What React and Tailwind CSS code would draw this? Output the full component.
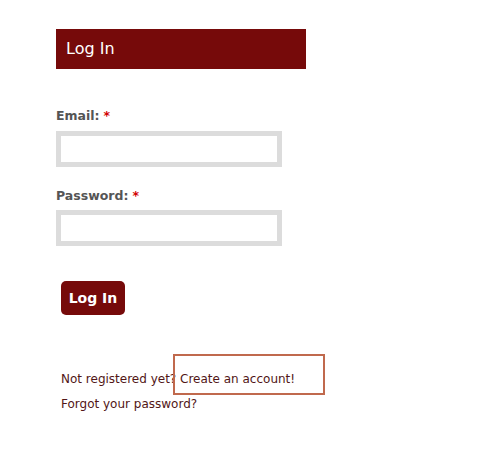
export default function App() {
  const font = { fontFamily: '"DejaVu Sans", Verdana, sans-serif' };
  return (
    <div className="w-[496px] h-[458px] bg-white relative" style={font}>
      <div className="pt-[29px] pl-[56px]">
        <div className="w-[250px] h-[40px] bg-[#760a0a] flex items-center pl-[10px]">
          <span className="text-white text-[16px]">Log In</span>
        </div>

        <div className="mt-[40px] h-[14px] flex items-center text-[12.5px] font-bold text-[#555555]">
          Email:<span className="text-[#d20000] ml-[4px]">*</span>
        </div>
        <input
          className="mt-[8px] block w-[226px] h-[36px] border-[5px] border-[#dcdcdc] bg-white outline-none"
          type="text"
        />

        <div className="mt-[22px] h-[14px] flex items-center text-[12.5px] font-bold text-[#555555]">
          Password:<span className="text-[#d20000] ml-[4px]">*</span>
        </div>
        <input
          className="mt-[7px] block w-[226px] h-[36px] border-[5px] border-[#dcdcdc] bg-white outline-none"
          type="password"
        />

        <button className="mt-[35px] ml-[5px] w-[64px] h-[34px] rounded-[5px] bg-[#760a0a] text-white text-[14px] font-bold flex items-center justify-center">
          Log In
        </button>

        <div className="mt-[52px] ml-[5px] relative text-[12px] text-[#521616] leading-[25px]">
          <div>
            Not registered yet? <span>Create an account!</span>
          </div>
          <div>Forgot your password?</div>
          <div className="absolute left-[112px] top-[-13px] w-[152px] h-[41px] border-2 border-[#c0694d]"></div>
        </div>
      </div>
    </div>
  );
}
